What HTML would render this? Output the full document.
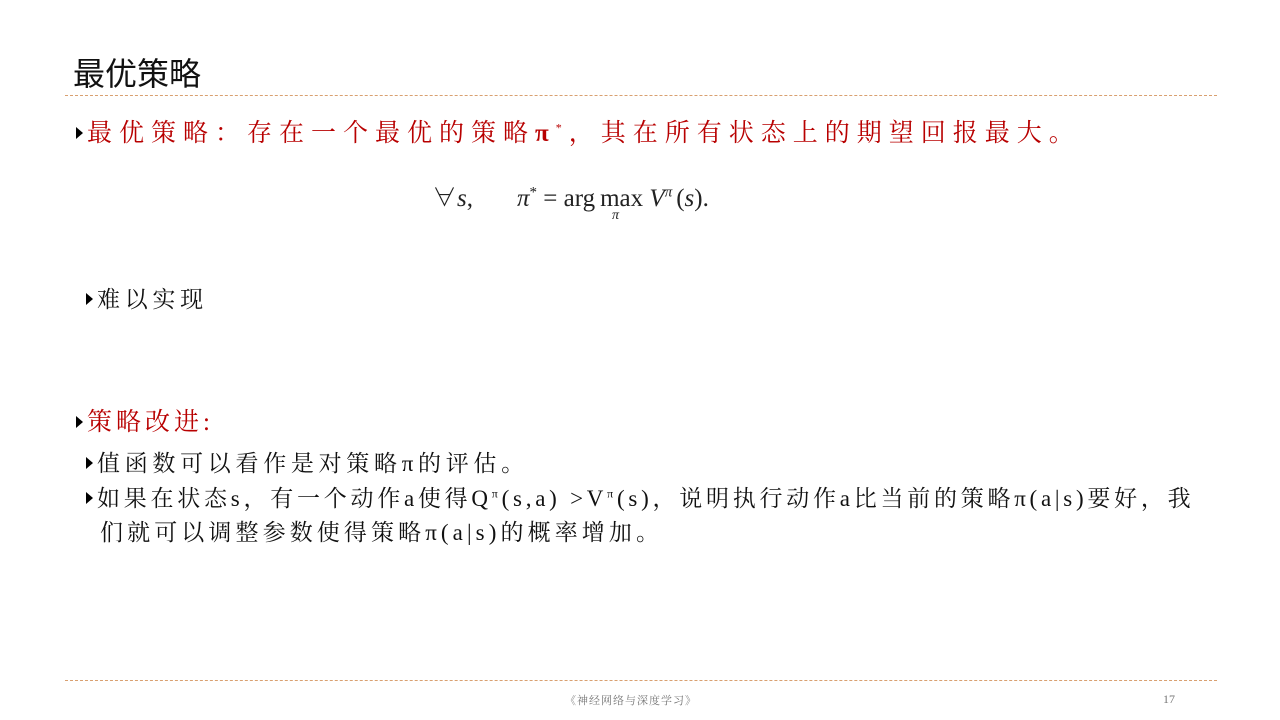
<!DOCTYPE html>
<html><head><meta charset="utf-8"><style>
body{margin:0;width:1280px;height:720px;background:#fff;position:relative;overflow:hidden;font-family:"Liberation Serif","Noto Serif CJK SC",serif;}
.a{position:absolute;white-space:nowrap;}
.dash{position:absolute;left:65px;width:1152px;border-top:1px dashed #d9a070;}
.tri{display:inline-block;width:0;height:0;border-top:6px solid transparent;border-bottom:6px solid transparent;border-left:7px solid #000;margin-right:4px;vertical-align:2px;}
.s{font-size:23px;letter-spacing:4.7px;color:#111;}
</style></head><body>
<div class="a" style="left:73px;top:49px;font-size:32px;font-family:'Liberation Sans','Noto Sans CJK SC',sans-serif;color:#111;">最优策略</div>
<div class="dash" style="top:95px;border-top-color:#d9a070"></div>
<div class="a" style="left:76px;top:113px;font-size:25px;letter-spacing:7px;color:#b80000;"><span class="tri" style="border-left-color:#000"></span>最优策略：存在一个最优的策略<b>π</b><sup style="font-size:12px">*</sup>，其在所有状态上的期望回报最大。</div>
<div class="a" style="left:432px;top:178px;font-size:25px;color:#222;">∀<i>s</i>,<span style="display:inline-block;width:44px"></span><i>π</i><sup style="font-size:15px">*</sup> = arg<span style="display:inline-block;width:5px"></span>max <i>V</i><sup style="font-size:15px"><i>π</i></sup><span style="display:inline-block;width:4px"></span>(<i>s</i>).</div>
<div class="a" style="left:612px;top:208px;font-size:14px;color:#222;"><i>π</i></div>
<div class="a s" style="left:86px;top:281px;"><span class="tri"></span>难以实现</div>
<div class="a" style="left:76px;top:402px;font-size:25px;letter-spacing:4px;color:#b80000;"><span class="tri"></span>策略改进:</div>
<div class="a s" style="left:86px;top:445px;"><span class="tri"></span>值函数可以看作是对策略π的评估。</div>
<div class="a s" style="left:86px;top:480px;letter-spacing:3.75px;"><span class="tri"></span>如果在状态s，有一个动作a使得Q<sup style="font-size:12px">π</sup>(s,a) &gt;V<sup style="font-size:12px">π</sup>(s)，说明执行动作a比当前的策略π(a|s)要好，我</div>
<div class="a s" style="left:100px;top:514px;letter-spacing:4.1px;">们就可以调整参数使得策略π(a|s)的概率增加。</div>
<div class="dash" style="top:680px"></div>
<div class="a" style="left:565px;top:692px;font-size:11px;color:#777;letter-spacing:1px;">《神经网络与深度学习》</div>
<div class="a" style="left:1163px;top:692px;font-size:12px;color:#777;">17</div>
</body></html>
